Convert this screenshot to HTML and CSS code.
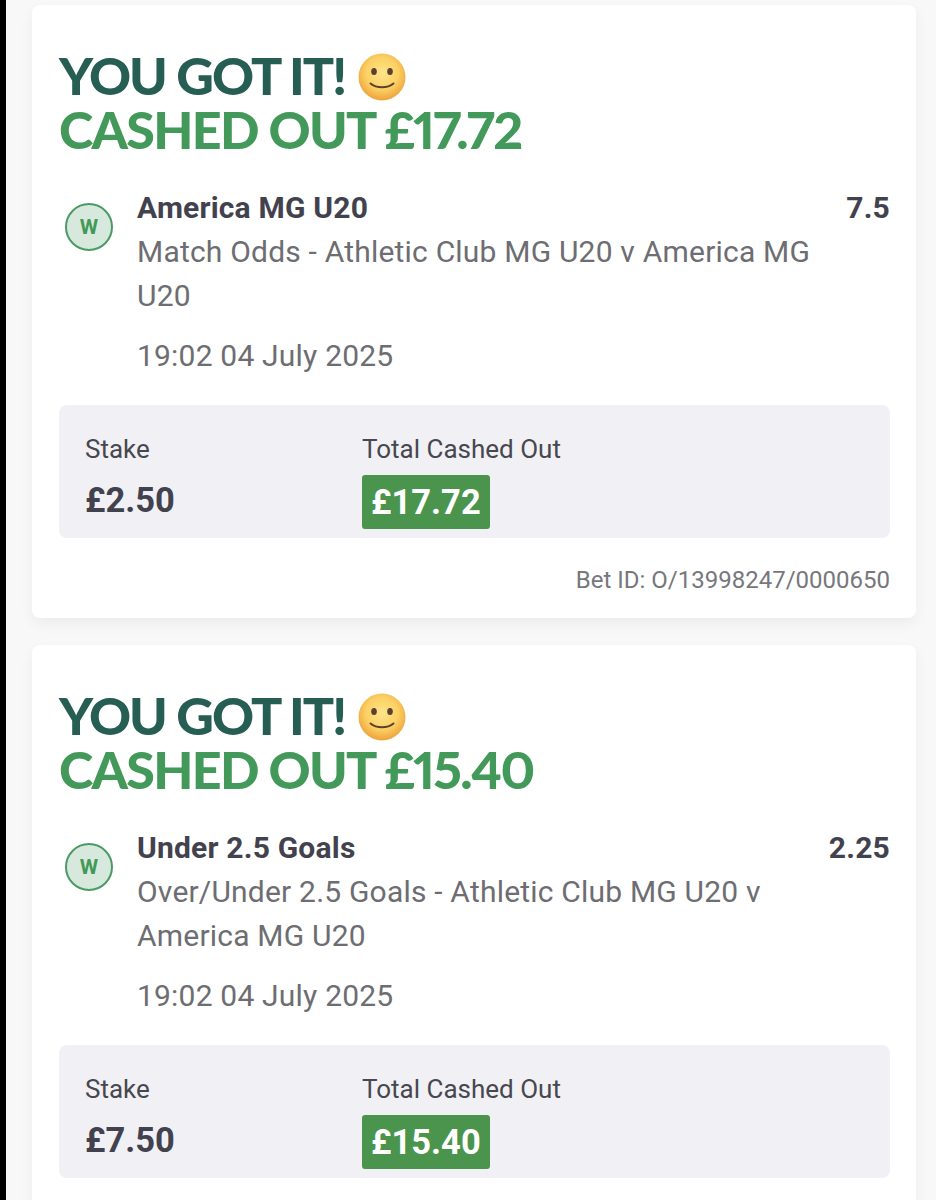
FILE: index.html
```html
<!DOCTYPE html>
<html>
<head>
<meta charset="utf-8" />
<title>Settled bets</title>
<link rel="stylesheet" href="styles.css">
</head>
<body>
<div class="page">
	<svg width="0" height="0" class="defs">
		<defs>
			<radialGradient id="face" cx="50%" cy="42%" r="58%">
				<stop offset="0" stop-color="#fde58a" />
				<stop offset="0.6" stop-color="#fbd062" />
				<stop offset="1" stop-color="#eda23c" />
			</radialGradient>
			<symbol id="smile" viewBox="0 0 48 48">
				<circle cx="24" cy="24" r="23.5" fill="url(#face)" />
				<ellipse cx="16" cy="18.5" rx="2.8" ry="3.6" fill="#5b4030" />
				<ellipse cx="32" cy="18.5" rx="2.8" ry="3.6" fill="#5b4030" />
				<path d="M12.5 30.5c6 5 17 5 23 0" fill="none" stroke="#5b4030" stroke-width="2" stroke-linecap="round" />
			</symbol>
		</defs>
	</svg>

	<div class="card">
		<h2 class="head">
			<span class="head-top">YOU GOT IT! <svg class="emoji"><use href="#smile" /></svg></span>
			<span class="head-win">CASHED OUT £17.72</span>
		</h2>
		<div class="leg">
			<div class="badge">W</div>
			<div class="leg-info">
				<div class="leg-title">America MG U20</div>
				<div class="leg-market">Match Odds - Athletic Club MG U20 v America MG U20</div>
				<div class="leg-date">19:02 04 July 2025</div>
			</div>
			<div class="leg-odds">7.5</div>
		</div>
		<div class="summary">
			<div class="stake">
				<div class="sum-label">Stake</div>
				<div class="sum-value">£2.50</div>
			</div>
			<div class="total">
				<div class="sum-label">Total Cashed Out</div>
				<div class="sum-pill">£17.72</div>
			</div>
		</div>
		<div class="bet-id">Bet ID: O/13998247/0000650</div>
	</div>

	<div class="card">
		<h2 class="head">
			<span class="head-top">YOU GOT IT! <svg class="emoji"><use href="#smile" /></svg></span>
			<span class="head-win">CASHED OUT £15.40</span>
		</h2>
		<div class="leg">
			<div class="badge">W</div>
			<div class="leg-info">
				<div class="leg-title">Under 2.5 Goals</div>
				<div class="leg-market">Over/Under 2.5 Goals - Athletic Club MG U20 v America MG U20</div>
				<div class="leg-date">19:02 04 July 2025</div>
			</div>
			<div class="leg-odds">2.25</div>
		</div>
		<div class="summary">
			<div class="stake">
				<div class="sum-label">Stake</div>
				<div class="sum-value">£7.50</div>
			</div>
			<div class="total">
				<div class="sum-label">Total Cashed Out</div>
				<div class="sum-pill">£15.40</div>
			</div>
		</div>
	</div>
</div>
</body>
</html>
```

FILE: styles.css
```css
*{margin: 0;padding: 0;box-sizing: border-box;}
html,body{height: 1200px;overflow: hidden;}
body{background: #000;font-family: Roboto, "Liberation Sans", sans-serif;}
.defs{position: absolute;}
.page
{
	margin-left: 6px;
	height: 1200px;
	background: #f8f8f9;
	padding: 5px 20px 0 26px;
	display: flex;
	flex-direction: column;
	gap: 27px;
}
.card
{
	flex: none;
	background: #fff;
	border-radius: 8px;
	padding: 43px 26px 23px 27px;
	box-shadow: 0 6px 14px rgba(0,0,0,0.05);
}
.card:last-child{padding-bottom: 40px;}
.head
{
	font-family: Lato, "Open Sans", sans-serif;
	font-weight: 900;
	font-size: 52px;
	line-height: 54px;
	font-variant-numeric: proportional-nums;
}
.head span{display: block;}
.head-top{color: #265e54;letter-spacing: -2px;}
.head-win{color: #43995a;letter-spacing: -1.7px;}
.emoji{width: 48px;height: 48px;vertical-align: -6px;margin-left: 2px;}
.leg{display: flex;margin-top: 30px;}
.badge
{
	flex: none;
	width: 48px;
	height: 48px;
	margin: 17px 24px 0 6px;
	border: 2px solid #4b9a63;
	border-radius: 50%;
	background: #d6e9dc;
	color: #43995a;
	font-weight: 700;
	font-size: 21px;
	line-height: 44px;
	text-align: center;
}
.leg-info{flex: 1;min-width: 0;padding-right: 30px;}
.leg-title{font-weight: 700;font-size: 30px;letter-spacing: 0.2px;line-height: 44px;color: #42424e;}
.leg-market{font-size: 30px;letter-spacing: 0.2px;line-height: 44px;color: #6d6d72;}
.leg-date{font-size: 30px;letter-spacing: 0.2px;line-height: 44px;color: #6d6d72;margin-top: 16px;}
.leg-odds{font-weight: 700;font-size: 30px;letter-spacing: 0.2px;line-height: 44px;color: #42424e;}
.summary
{
	display: flex;
	height: 133px;
	margin-top: 27px;
	padding: 26px 26px 0 26px;
	background: #f1f1f5;
	border-radius: 8px;
}
.stake{width: 277px;}
.sum-label{font-size: 26px;line-height: 36px;color: #47474f;}
.sum-value{font-weight: 700;font-size: 34.5px;line-height: 40px;color: #42424e;margin-top: 13px;}
.sum-pill
{
	display: inline-block;
	margin-top: 8px;
	padding: 0 9px;
	height: 54px;
	line-height: 54px;
	background: #4b944d;
	border-radius: 3px;
	color: #fff;
	font-weight: 700;
	font-size: 34.5px;
}
.bet-id{font-size: 24px;line-height: 30px;color: #77777c;text-align: right;margin-top: 27px;}
```
